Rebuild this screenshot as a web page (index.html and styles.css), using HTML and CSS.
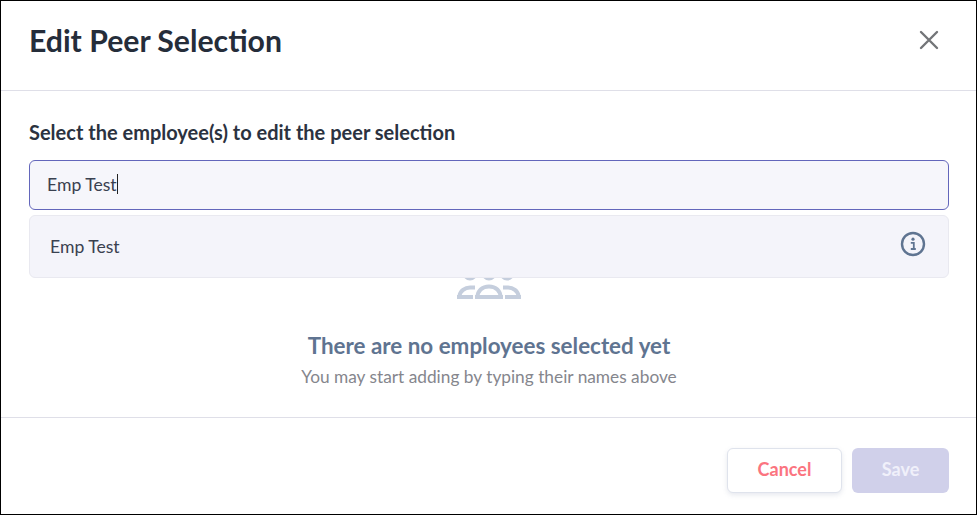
FILE: index.html
```html
<!DOCTYPE html>
<html lang="en">
<head>
    <meta charset="UTF-8">
    <title>Edit Peer Selection</title>
    <link rel="stylesheet" href="styles.css">
</head>
<body>
    <div class="modal">
        <header class="modal-header">
            <h1>Edit Peer Selection</h1>
            <svg class="close-icon" width="20" height="20" viewBox="0 0 20 20">
                <path d="M2 2 L18 18 M18 2 L2 18" stroke="#737578" stroke-width="2.4" stroke-linecap="round" fill="none"/>
            </svg>
        </header>

        <main class="modal-body">
            <label class="field-label">Select the employee(s) to edit the peer selection</label>
            <div class="search">
                <div class="search-input"><span>Emp Test</span><i class="caret"></i></div>
                <div class="search-result">
                    <span>Emp Test</span>
                    <svg width="26" height="26" viewBox="0 0 26 26">
                        <circle cx="13" cy="13" r="11" stroke="#5f7491" stroke-width="2.4" fill="none"/>
                        <circle cx="13" cy="8.2" r="1.6" fill="#5f7491"/>
                        <path d="M10.8 11.8 H13.8 V17.6 M10.8 18 H15.8" stroke="#5f7491" stroke-width="1.8" fill="none"/>
                    </svg>
                </div>
            </div>

            <div class="empty-state">
                <svg class="people-icon" width="64" height="40" viewBox="0 0 64 40">
                    <g fill="none" stroke="#c5cedd" stroke-width="4">
                        <circle cx="13" cy="13" r="5.5"/>
                        <circle cx="32" cy="13" r="5.5"/>
                        <circle cx="50" cy="13" r="5.5"/>
                        <path d="M2.5 36 C3 31 8 27.5 13 27.5 H18"/>
                        <path d="M61.5 36 C61 31 56 27.5 51 27.5 H46"/>
                        <path d="M20.5 37 C20.5 31 25 26.5 32 26.5 C39 26.5 43.5 31 43.5 37"/>
                        <path d="M0 37 H16 M18 37 H46 M48 37 H64"/>
                    </g>
                </svg>
                <h2>There are no employees selected yet</h2>
                <p>You may start adding by typing their names above</p>
            </div>
        </main>

        <footer class="modal-footer">
            <button class="btn btn-cancel">Cancel</button>
            <button class="btn btn-save">Save</button>
        </footer>
    </div>
</body>
</html>
```

FILE: styles.css
```css
* {
    box-sizing: border-box;
}

body {
    margin: 0;
    background: #fff;
    font-family: Lato, "Liberation Sans", sans-serif;
    overflow: hidden;
}

.modal {
    width: 977px;
    height: 515px;
    border: 1px solid #000;
    display: flex;
    flex-direction: column;
}

.modal-header {
    height: 90px;
    padding: 0 37px 12px 28px;
    border-bottom: 1px solid #dfdfe8;
    display: flex;
    align-items: center;
    justify-content: space-between;
}

.modal-header h1 {
    margin: 0;
    font-size: 30.2px;
    font-weight: 700;
    color: #252d3a;
}

.modal-body {
    flex: 1;
    padding: 29px 27px 0 28px;
}

.field-label {
    display: block;
    font-size: 20px;
    font-weight: 700;
    line-height: 24px;
    color: #2b3240;
}

.search {
    position: relative;
    margin-top: 16px;
}

.search-input {
    height: 50px;
    padding: 0 17px 2px;
    border: 1px solid #6366bb;
    border-radius: 6px;
    background: #f6f6fb;
    display: flex;
    align-items: center;
    font-size: 17.6px;
    color: #3a4150;
}

.caret {
    width: 1px;
    height: 20px;
    background: #222;
}

.search-result {
    position: absolute;
    top: 55px;
    left: 0;
    right: 0;
    height: 63px;
    padding: 0 22px 0 20px;
    border: 1px solid #e9e9f0;
    border-radius: 6px;
    background: #f4f4fa;
    display: flex;
    align-items: center;
    justify-content: space-between;
    font-size: 17.6px;
    color: #3a4150;
}

.search-result svg {
    margin-bottom: 6px;
}

.empty-state {
    margin-top: 50px;
    text-align: center;
}

.people-icon {
    display: block;
    margin: 0 auto;
}

.empty-state h2 {
    margin: 31px 0 0;
    font-size: 22.4px;
    font-weight: 700;
    line-height: 30px;
    color: #5f7491;
}

.empty-state p {
    margin: 5px 0 0;
    font-size: 17.3px;
    line-height: 22px;
    color: #85868d;
}

.modal-footer {
    height: 97px;
    padding: 30px 27px 0 0;
    border-top: 1px solid #dfdfe8;
    display: flex;
    justify-content: flex-end;
    align-items: flex-start;
    gap: 10px;
}

.btn {
    height: 45px;
    padding: 0 0 3px;
    border-radius: 6px;
    font-family: inherit;
    font-size: 18px;
    font-weight: 700;
}

.btn-cancel {
    width: 115px;
    border: 1px solid #dfe3ec;
    background: #fff;
    color: #fb7480;
    box-shadow: 0 2px 5px rgba(90, 100, 140, 0.15);
}

.btn-save {
    width: 97px;
    border: none;
    background: #d0d0ea;
    color: #f0f0fa;
}
```
